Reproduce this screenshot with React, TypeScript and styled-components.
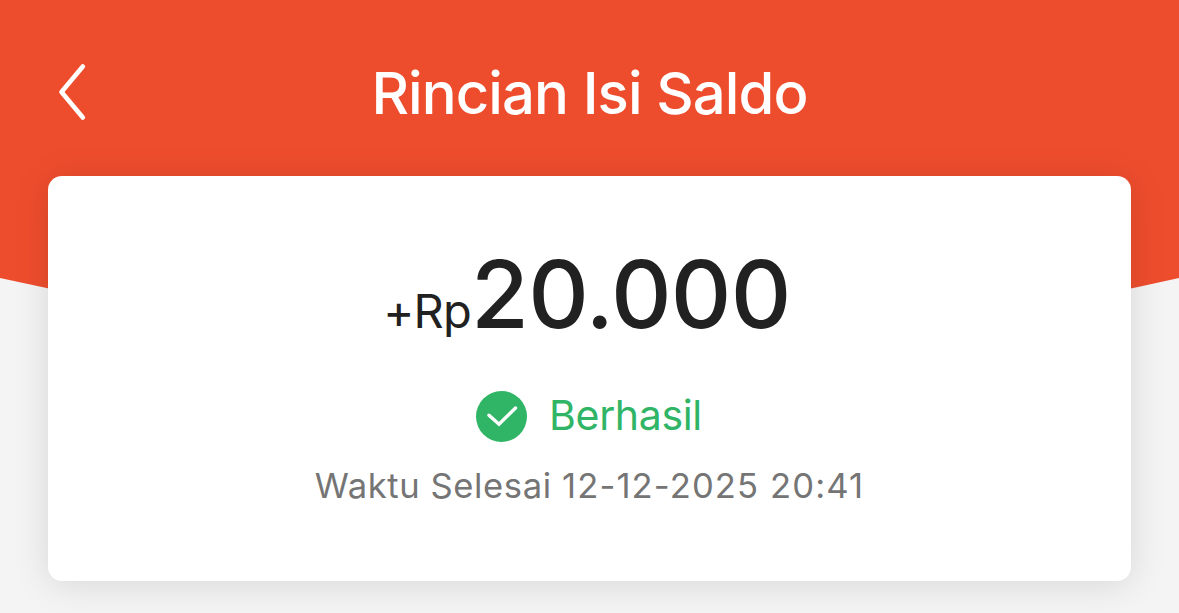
import React from "react";
import styled, { createGlobalStyle } from "styled-components";

const Global = createGlobalStyle`
  * { box-sizing: border-box; }
  body { margin: 0; background: #f4f4f4; font-family: Inter, "Liberation Sans", sans-serif; }
`;

const Page = styled.main`
  position: relative;
  height: 613px;
  overflow: hidden;
  background: #f4f4f4;
`;

const Backdrop = styled.svg`
  position: absolute;
  inset: 0;
  width: 100%;
  height: 360px;
`;

const Header = styled.header`
  position: relative;
  display: grid;
  grid-template-columns: 96px 1fr 96px;
  align-items: center;
  height: 176px;
  padding: 8px 0 0;
`;

const BackButton = styled.button`
  display: flex;
  padding: 0 0 0 56px;
  border: 0;
  background: none;
  color: #fff;
`;

const Title = styled.h1`
  margin: 0;
  padding-top: 2px;
  text-align: center;
  color: #fff;
  font-size: 58px;
  line-height: 70px;
  font-weight: 500;
  letter-spacing: -0.9px;
  white-space: nowrap;
`;

const Card = styled.section`
  position: relative;
  display: flex;
  flex-direction: column;
  align-items: center;
  height: 405px;
  margin: 0 48px;
  padding-top: 60px;
  border-radius: 14px;
  background: #fff;
  box-shadow: 0 3px 36px rgba(0, 0, 0, 0.12);
`;

const Amount = styled.div`
  display: flex;
  align-items: baseline;
  height: 116px;
  padding-right: 5px;
  color: #212121;
  line-height: 116px;
  white-space: nowrap;
`;

const Currency = styled.span`
  font-size: 47px;
  letter-spacing: -0.8px;
`;

const Value = styled.span`
  font-size: 94px;
  font-weight: 500;
  letter-spacing: -0.7px;
`;

const Status = styled.div`
  display: flex;
  align-items: center;
  gap: 22px;
  height: 51px;
  margin-top: 39px;
  padding-right: 1px;
  color: #30b566;
  font-size: 41px;
  letter-spacing: -0.35px;
`;

const StatusLabel = styled.span`
  line-height: 49px;
  padding-bottom: 2px;
`;

const Time = styled.p`
  margin: 17px 0 0;
  color: #757575;
  font-size: 34.6px;
  line-height: 52px;
  letter-spacing: 0.6px;
  white-space: nowrap;

  time {
    letter-spacing: 1.12px;
  }
`;

export default function App() {
  return (
    <Page>
      <Global />
      <Backdrop viewBox="0 0 1179 360" preserveAspectRatio="none" aria-hidden="true">
        <path d="M0 0H1179V278Q590 412 0 278Z" fill="#ee4d2d" />
      </Backdrop>
      <Header>
        <BackButton aria-label="Kembali">
          <svg width="32" height="60" viewBox="0 0 32 60" fill="none" stroke="currentColor" strokeWidth="4.6" strokeLinecap="round" strokeLinejoin="round">
            <path d="M26.8 4.5L5.5 30L26.8 55.5" />
          </svg>
        </BackButton>
        <Title>Rincian Isi Saldo</Title>
      </Header>
      <Card>
        <Amount>
          <Currency>+Rp</Currency>
          <Value>20.000</Value>
        </Amount>
        <Status>
          <svg width="51" height="51" viewBox="0 0 51 51" fill="none">
            <circle cx="25.5" cy="25.5" r="25.5" fill="#30b566" />
            <path d="M13 24.2L23 33.2L39.5 17" stroke="#fff" strokeWidth="3.4" strokeLinecap="round" />
          </svg>
          <StatusLabel>Berhasil</StatusLabel>
        </Status>
        <Time>
          Waktu Selesai <time dateTime="2025-12-12T20:41">12-12-2025 20:41</time>
        </Time>
      </Card>
    </Page>
  );
}
